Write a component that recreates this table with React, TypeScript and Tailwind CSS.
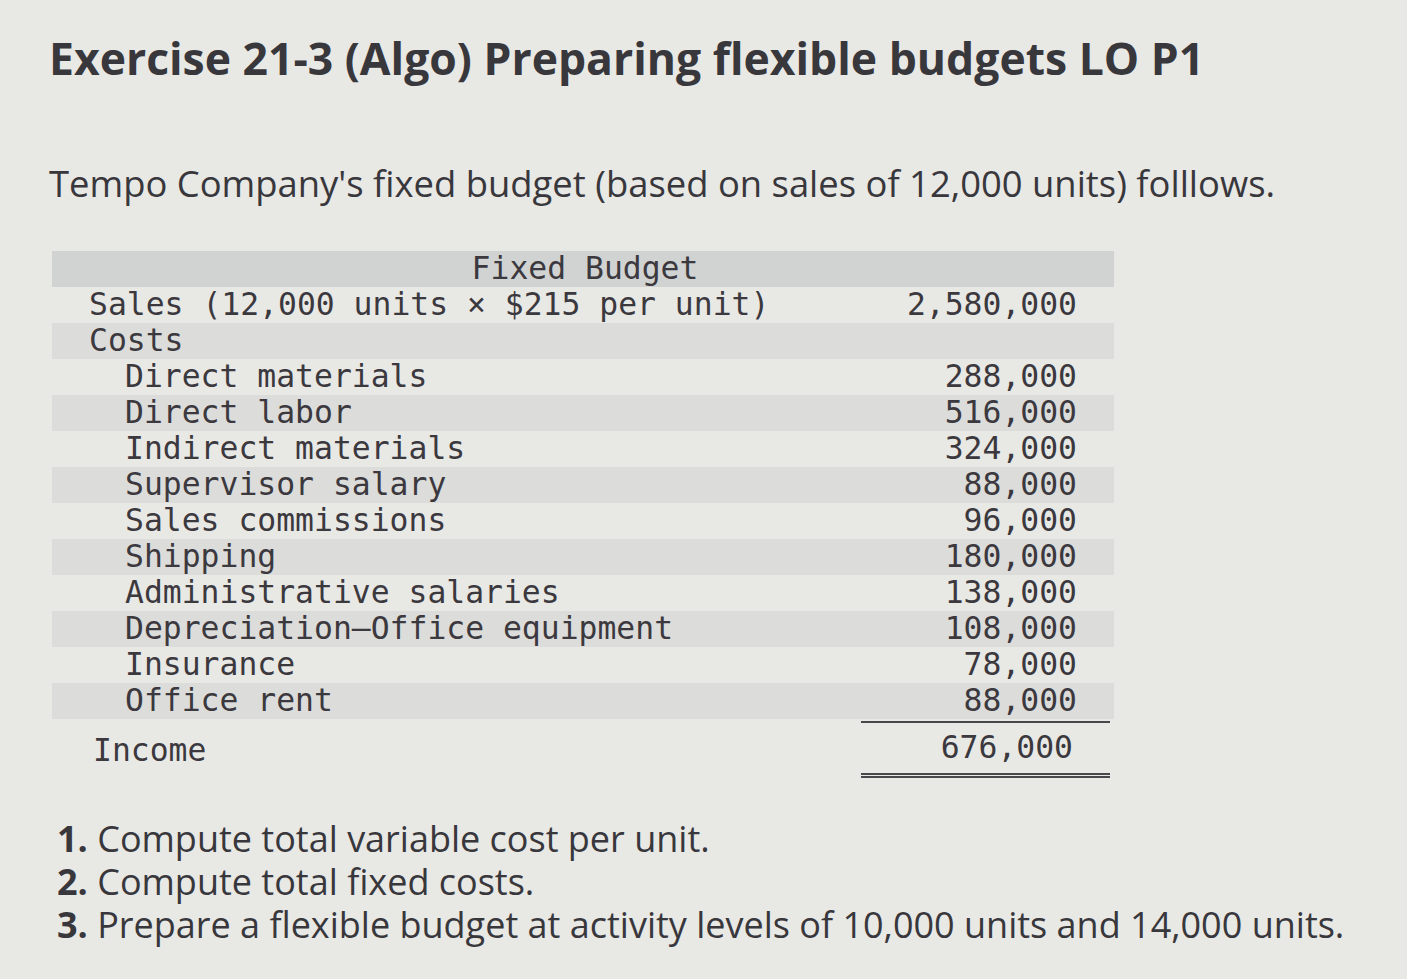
const rows: { label: string; value: string; indent: number; shaded: boolean }[] = [
  { label: 'Sales (12,000 units × $215 per unit)', value: '2,580,000', indent: 0, shaded: false },
  { label: 'Costs', value: '', indent: 0, shaded: true },
  { label: 'Direct materials', value: '288,000', indent: 1, shaded: false },
  { label: 'Direct labor', value: '516,000', indent: 1, shaded: true },
  { label: 'Indirect materials', value: '324,000', indent: 1, shaded: false },
  { label: 'Supervisor salary', value: '88,000', indent: 1, shaded: true },
  { label: 'Sales commissions', value: '96,000', indent: 1, shaded: false },
  { label: 'Shipping', value: '180,000', indent: 1, shaded: true },
  { label: 'Administrative salaries', value: '138,000', indent: 1, shaded: false },
  { label: 'Depreciation—Office equipment', value: '108,000', indent: 1, shaded: true },
  { label: 'Insurance', value: '78,000', indent: 1, shaded: false },
  { label: 'Office rent', value: '88,000', indent: 1, shaded: true },
];

export default function App() {
  return (
    <div className="min-h-[979px] w-[1407px] bg-[#e8e8e5] text-[#38373c] overflow-hidden">
      <div className="pl-[49px] pt-[28px] font-['Open_Sans',sans-serif]">
        <h1 className="text-[44.5px] font-bold leading-[60px] whitespace-nowrap">
          Exercise 21-3 (Algo) Preparing flexible budgets LO P1
        </h1>
        <p className="mt-[70px] text-[36.4px] leading-[50px] whitespace-nowrap">
          Tempo Company's fixed budget (based on sales of 12,000 units) folllows.
        </p>
      </div>

      <div className="ml-[52px] mt-[43px] w-[1062px] font-['DejaVu_Sans_Mono',monospace] text-[31.4px] text-[#3b383e]">
        <div className="h-[36px] bg-[#d1d3d3] flex items-center">
          <div className="flex-1 text-center pl-[4px]">Fixed Budget</div>
        </div>
        {rows.map((r) => (
          <div
            key={r.label}
            className={`h-[36px] flex items-center ${r.shaded ? 'bg-[#dcdcda]' : ''}`}
          >
            <div className={`flex-1 whitespace-pre ${r.indent ? 'pl-[73px]' : 'pl-[37px]'}`}>{r.label}</div>
            <div className="w-[249px] text-right pr-[37px]">{r.value}</div>
          </div>
        ))}
        <div className="flex mt-[2px]">
          <div className="flex-1 pl-[41px] pt-[6px]">Income</div>
          <div className="w-[249px] mr-[4px] border-t-2 border-[#4a474c]">
            <div className="h-[55px] flex items-center justify-end pr-[37px] border-b-[5px] border-double border-[#4a474c]">
              676,000
            </div>
          </div>
        </div>
      </div>

      <ol className="ml-[57px] mt-[39px] font-['Open_Sans',sans-serif] text-[36px] leading-[43px] whitespace-nowrap">
        <li><span className="font-bold">1.</span> Compute total variable cost per unit.</li>
        <li><span className="font-bold">2.</span> Compute total fixed costs.</li>
        <li><span className="font-bold">3.</span> Prepare a flexible budget at activity levels of 10,000 units and 14,000 units.</li>
      </ol>
    </div>
  );
}
